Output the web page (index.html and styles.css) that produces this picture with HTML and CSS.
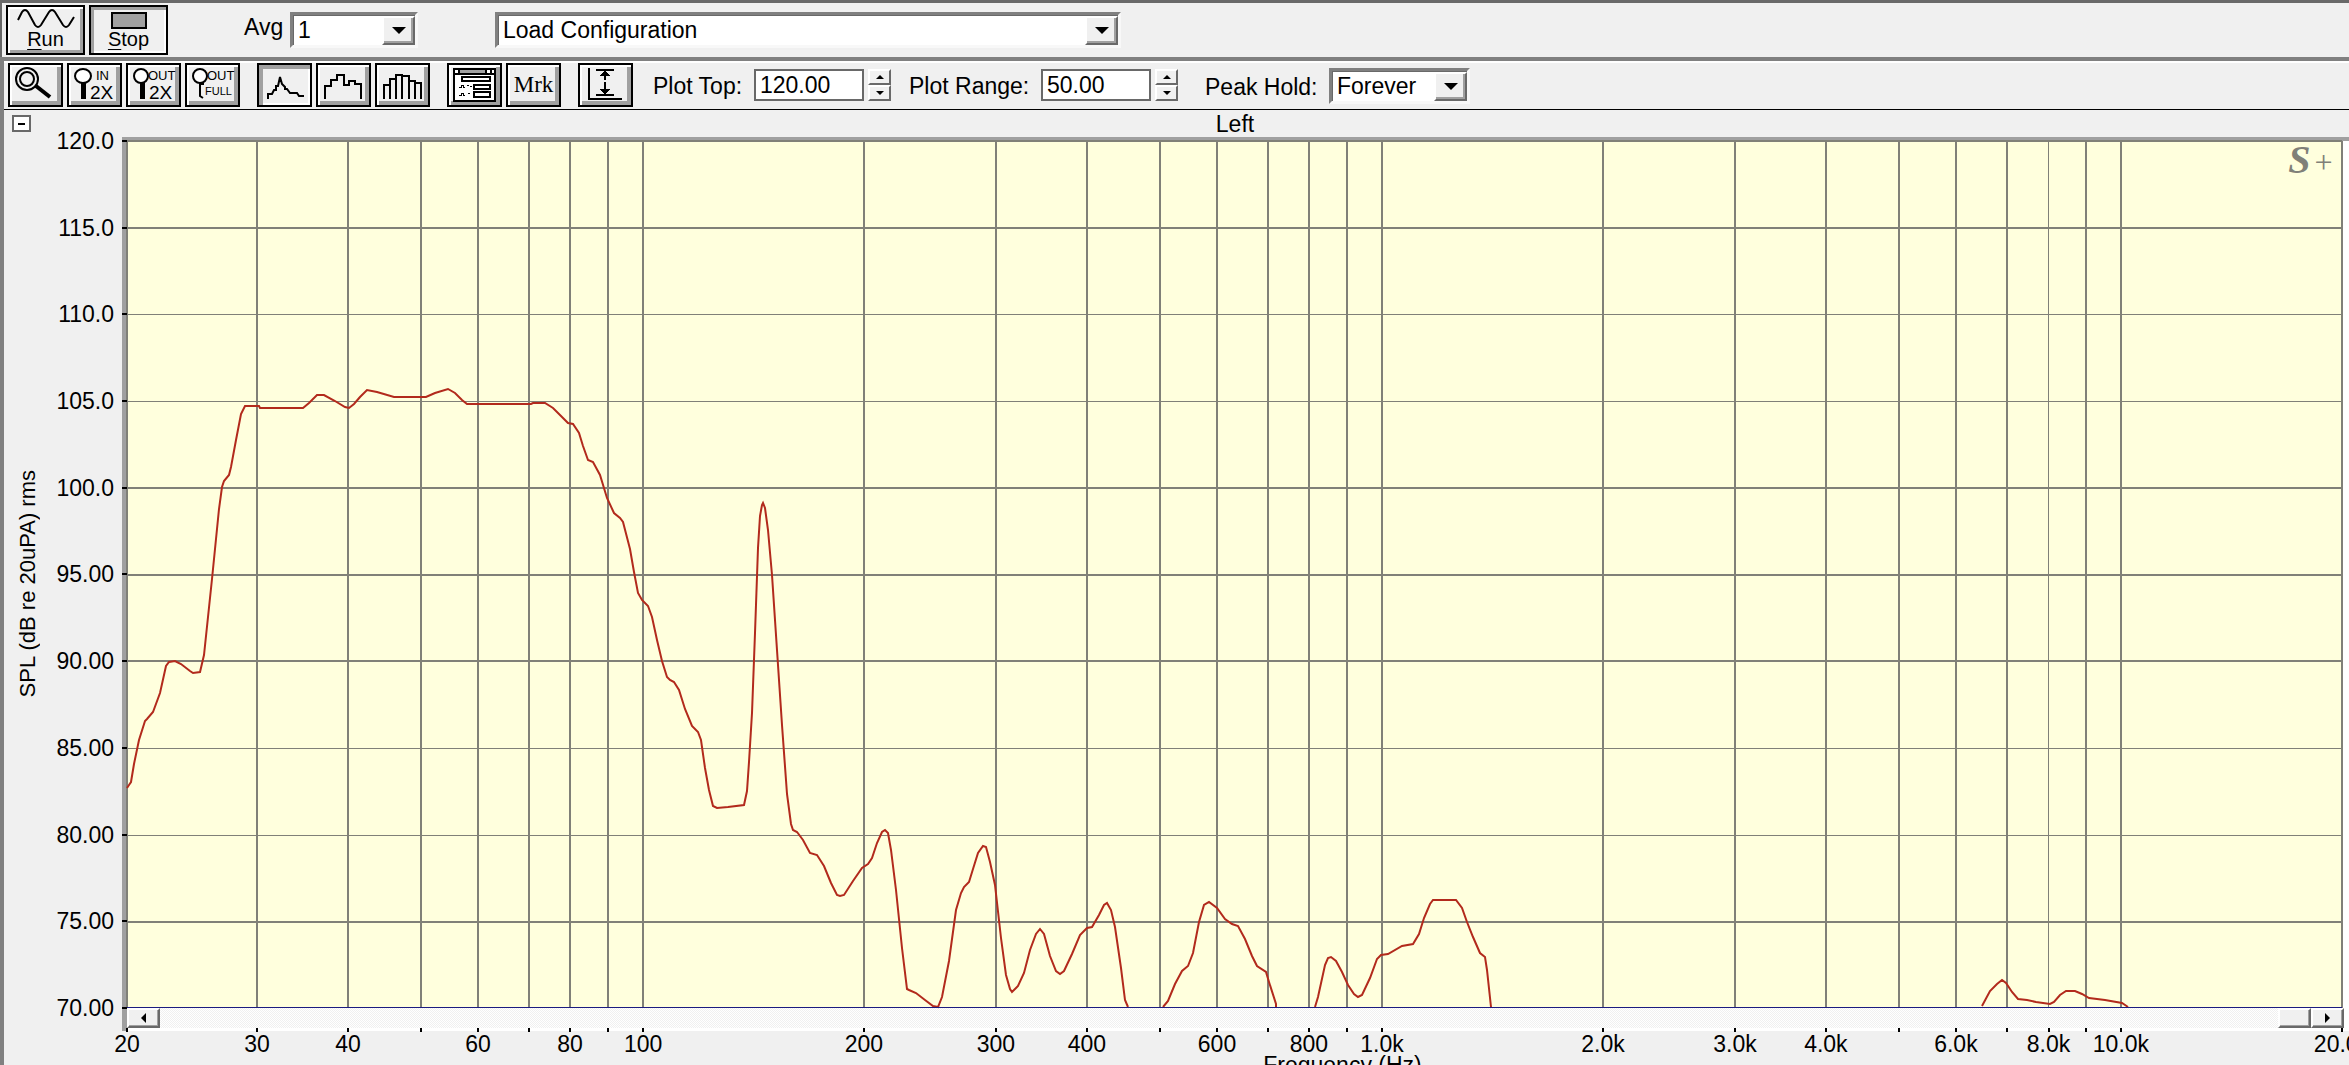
FILE: index.html
```html
<!DOCTYPE html>
<html lang="en">
<head>
<meta charset="utf-8">
<meta name="viewport" content="width=device-width, initial-scale=1">
<title>Spectrum - Left</title>
<link rel="stylesheet" href="styles.css">
</head>
<body>
<header class="run-bar">
  <button class="run-btn" type="button">
    <svg width="58" height="20" viewBox="0 0 58 20" aria-hidden="true"><path d="M1 11L5 3Q8 -1 11 3L18 16Q21 20 24 16L32 3Q35 -1 38 3L46 16Q49 20 52 16L57 8"/></svg>
    <span><u>R</u>un</span>
  </button>
  <button class="run-btn pressed" type="button">
    <svg width="38" height="20" viewBox="0 0 38 20" aria-hidden="true"><rect class="block" x="2" y="4" width="34" height="15"/></svg>
    <span><u>S</u>top</span>
  </button>
  <label class="avg-label" for="avg">Avg</label>
  <span class="combo avg"><select id="avg"><option>1</option></select><i class="arrow"></i></span>
  <span class="combo config"><select aria-label="Configuration"><option>Load Configuration</option></select><i class="arrow"></i></span>
</header>

<div class="window">
  <div class="tool-bar">
    <div class="group">
      <button class="tool" type="button" aria-label="Zoom">
        <svg viewBox="0 0 51 40"><circle cx="17" cy="14" r="11"/><circle cx="17" cy="14" r="7"/><path class="thick" d="M26 21L40 32"/></svg>
      </button>
      <button class="tool" type="button" aria-label="Zoom in 2X">
        <svg viewBox="0 0 51 40"><ellipse class="lens" cx="14" cy="11" rx="8" ry="7"/><rect class="solid" x="12" y="18" width="5" height="16"/><text class="small" x="27" y="15">IN</text><text class="big" x="21" y="34">2X</text></svg>
      </button>
      <button class="tool" type="button" aria-label="Zoom out 2X">
        <svg viewBox="0 0 51 40"><ellipse class="lens" cx="13" cy="11" rx="7" ry="7"/><rect class="solid" x="12" y="18" width="5" height="16"/><text class="small" x="20" y="15">OUT</text><text class="big" x="21" y="34">2X</text></svg>
      </button>
      <button class="tool" type="button" aria-label="Zoom out full">
        <svg viewBox="0 0 51 40"><ellipse class="lens" cx="13" cy="11" rx="7" ry="7"/><path d="M17 19H13V31L16 33"/><text class="small" x="20" y="15">OUT</text><text class="tiny" x="18" y="30">FULL</text></svg>
      </button>
    </div>
    <div class="group">
      <button class="tool pressed" type="button" aria-label="Line plot">
        <svg viewBox="0 0 51 40"><path d="M9 34V29H13L15 25H17V21H19L21 12L23 19L26 22V24H28L31 28H38L40 31H45"/></svg>
      </button>
      <button class="tool" type="button" aria-label="Step plot">
        <svg class="crisp" viewBox="0 0 51 40"><path d="M7 34V21H13V15H19V10H26V20H31V16H37V19H43V34"/></svg>
      </button>
      <button class="tool" type="button" aria-label="Bar plot">
        <svg class="crisp" viewBox="0 0 51 40"><path d="M7 34V20H13M13 34V14H19M19 34V10H25V34M25 11H32V34M32 16H38V34M38 18H44V34"/></svg>
      </button>
    </div>
    <div class="group">
      <button class="tool" type="button" aria-label="Options">
        <svg class="crisp" viewBox="0 0 51 40"><rect class="paper" x="5" y="4" width="41" height="32"/><rect class="shade" x="11" y="5" width="25" height="3"/><path d="M5 9H46M10 4V9M37 4V9M42 4V9"/><rect x="13" y="12" width="28" height="4"/><rect x="25" y="20" width="16" height="4"/><rect x="25" y="27" width="16" height="5"/><path class="thin" d="M10 22h2v-2h2v2h2M18 20h2M21 21h2M10 30h2v-2h2v2h2M19 28h2"/></svg>
      </button>
      <button class="tool mrk" type="button">Mrk</button>
    </div>
    <div class="group last">
      <button class="tool" type="button" aria-label="Auto scale">
        <svg class="crisp" viewBox="0 0 51 40"><path d="M9 3V34H42M16 5H34M16 30H34M25 6V15M25 17V29"/><path class="solid" d="M25 5L30 11H20ZM25 30L30 24H20Z"/></svg>
      </button>
    </div>
    <label class="top-label" for="plot-top">Plot Top:</label>
    <input class="value" id="plot-top" type="text" value="120.00">
    <span class="spin"><button type="button" aria-label="Raise plot top"><i class="up"></i></button><button type="button" aria-label="Lower plot top"><i class="down"></i></button></span>
    <label class="range-label" for="plot-range">Plot Range:</label>
    <input class="value" id="plot-range" type="text" value="50.00">
    <span class="spin"><button type="button" aria-label="Raise plot range"><i class="up"></i></button><button type="button" aria-label="Lower plot range"><i class="down"></i></button></span>
    <label class="hold-label" for="hold">Peak Hold:</label>
    <span class="combo hold"><select id="hold"><option>Forever</option></select><i class="arrow"></i></span>
  </div>

  <main class="chart">
    <div class="chart-head">
      <button class="collapse" type="button" aria-label="Collapse"></button>
      <h1>Left</h1>
    </div>
    <div class="y-title">SPL (dB re 20uPA) rms</div>
    <ul class="y-axis">
      <li>120.0</li><li>115.0</li><li>110.0</li><li>105.0</li><li>100.0</li><li>95.00</li><li>90.00</li><li>85.00</li><li>80.00</li><li>75.00</li><li>70.00</li>
    </ul>
    <div class="plot">
      <div class="canvas">
        <svg viewBox="127 141 2215 867" preserveAspectRatio="none" role="img" aria-label="Sound pressure level against frequency">
          <path class="grid" d="M127 141V1008M257 141V1008M348 141V1008M421 141V1008M478 141V1008M529 141V1008M570 141V1008M608 141V1008M643 141V1008M864 141V1008M996 141V1008M1087 141V1008M1160 141V1008M1217 141V1008M1268 141V1008M1309 141V1008M1347 141V1008M1382 141V1008M1603 141V1008M1735 141V1008M1826 141V1008M1899 141V1008M1956 141V1008M2007 141V1008M2086 141V1008M2121 141V1008M2342 141V1008"/>
          <path class="grid" d="M127 141H2342M127 228H2342M127 488H2342M127 575H2342M127 661H2342M127 922H2342"/>
          <path class="grid fine" d="M2048.500 141V1008M127 314.500H2342M127 401.500H2342M127 748.500H2342M127 835.500H2342"/>
          <path class="trace" d="M127 788L129 785L131 782L134 764L139 740L145 721L147 719L153 712L160 693L166 666L169 662L175 661L181 664L190 671L193 673L200 672L204 655L212 579L219 509L222 487L224 481L229 475L231 467L236 440L241 414L245 406L259 406L260 408L303 408L309 403L317 395L324 395L335 401L345 407L349 408L354 404L360 397L367 390L377 392L394 397L426 397L435 393L448 389L455 393L462 400L467 404L531 404L533 403L545 403L553 408L562 417L568 423L573 424L579 433L583 446L588 460L593 462L600 475L607 498L614 513L620 518L623 522L630 549L634 572L638 593L642 600L648 606L652 617L657 640L662 661L667 677L670 680L674 682L679 690L685 709L692 726L698 732L701 740L705 768L709 790L713 806L717 808L728 807L744 805L747 791L749 762L752 713L755 633L758 548L760 516L762 505L763 503L765 508L768 530L772 575L777 650L782 725L787 794L791 824L793 830L797 832L803 840L810 853L817 855L824 866L831 883L837 895L840 896L844 895L853 881L862 868L868 864L872 858L877 843L882 832L885 830L888 833L891 850L896 890L902 948L907 989L909 990L916 993L925 1000L933 1006L938 1007L942 997L949 961L956 910L961 893L964 887L969 882L973 869L978 853L983 846L986 847L990 862L995 885L1001 938L1006 975L1010 989L1012 992L1018 986L1024 973L1030 950L1036 934L1040 929L1044 934L1050 956L1056 971L1060 974L1064 971L1072 954L1080 935L1087 928L1092 927L1099 915L1104 905L1107 903L1111 910L1115 927L1121 968L1125 1000L1128 1007M1163 1007L1168 1001L1175 984L1182 971L1188 966L1193 953L1199 922L1204 905L1209 902L1217 908L1225 919L1232 924L1238 926L1245 939L1252 956L1257 966L1266 972L1269 982L1276 1004V1007M1315 1007L1318 997L1325 965L1328 958L1331 957L1336 961L1342 972L1348 985L1354 994L1358 997L1362 995L1370 978L1377 959L1381 955L1388 954L1402 946L1413 944L1419 934L1424 918L1430 904L1433 900H1456L1462 908L1467 922L1473 937L1480 953L1485 957L1487 970L1491 1007M1982 1006L1990 991L1997 984L2002 980L2006 983L2012 992L2018 999L2027 1000L2036 1002L2050 1004L2054 1002L2060 995L2066 991H2075L2082 994L2089 998L2105 1000L2122 1003L2128 1007"/>
          <path class="base" d="M127 1007.500H2342"/>
        </svg>
        <span class="logo"><b>S</b>+</span>
      </div>
      <div class="scroll">
        <button type="button" aria-label="Scroll left"><i class="left"></i></button>
        <span class="track"></span>
        <button type="button" aria-label="Scroll position"></button>
        <button type="button" aria-label="Scroll right"><i class="right"></i></button>
      </div>
    </div>
    <div class="x-axis">
      <ul class="x-ticks">
        <li style="left:0%">20</li><li style="left:5.87%">30</li><li style="left:9.98%">40</li><li style="left:13.27%"></li><li style="left:15.85%">60</li><li style="left:18.15%"></li><li style="left:20%">80</li><li style="left:21.72%"></li><li style="left:23.3%">100</li><li style="left:33.27%">200</li><li style="left:39.23%">300</li><li style="left:43.34%">400</li><li style="left:46.64%"></li><li style="left:49.21%">600</li><li style="left:51.51%"></li><li style="left:53.36%">800</li><li style="left:55.08%"></li><li style="left:56.66%">1.0k</li><li style="left:66.64%">2.0k</li><li style="left:72.6%">3.0k</li><li style="left:76.7%">4.0k</li><li style="left:80%"></li><li style="left:82.57%">6.0k</li><li style="left:84.88%"></li><li style="left:86.75%">8.0k</li><li style="left:88.44%"></li><li style="left:90.02%">10.0k</li><li style="left:100%">20.0k</li>
      </ul>
      <div class="x-title">Frequency (Hz)</div>
    </div>
  </main>
</div>
</body>
</html>
```
FILE: styles.css
```css
* { box-sizing: border-box; }

body {
  margin: 0;
  height: 100vh;
  display: flex;
  flex-direction: column;
  overflow: hidden;
  background: #f0f0f0;
  color: #000;
  font: 23px/26px "Liberation Sans", Arial, sans-serif;
}

button, select, input { font: inherit; color: inherit; border-radius: 0; margin: 0; }
ul { list-style: none; margin: 0; padding: 0; }
i { font-style: normal; }

/* top bar */
.run-bar {
  display: flex;
  flex: none;
  height: 57px;
  padding: 2px 0 0 4px;
  border-top: 3px solid #696969;
  border-left: 2px solid #696969;
}

.run-btn {
  width: 79px;
  height: 50px;
  margin-right: 4px;
  padding: 2px 0 0;
  display: flex;
  flex-direction: column;
  align-items: center;
  border: 2px solid #000;
  background: #f0f0f0;
  box-shadow: inset 2px 2px #fff, inset -3px -3px #a0a0a0;
  font-size: 20px;
  line-height: 20px;
}
.run-btn svg { display: block; flex: none; overflow: visible; fill: none; stroke: #000; stroke-width: 2; }
.run-btn .block { fill: #a0a0a0; }
.run-btn u { text-underline-offset: 3px; text-decoration-thickness: 1px; }
.run-btn.pressed { box-shadow: inset 3px 3px #a0a0a0, inset -2px -2px #fff; }

.avg-label { margin: 9px 0 0 72px; width: 46px; }

.combo { position: relative; display: block; flex: none; height: 36px; }
.combo select {
  display: block;
  width: 100%;
  height: 100%;
  padding: 0 5px;
  appearance: none;
  background: #fff;
  border: 3px solid;
  border-color: #808080 #f8f8f8 #f8f8f8 #808080;
  box-shadow: inset 1px 1px #696969;
}
.combo .arrow {
  position: absolute;
  right: 3px;
  top: 4px;
  bottom: 3px;
  width: 33px;
  background: #f0f0f0;
  border: 2px solid;
  border-color: #fff #696969 #696969 #fff;
  box-shadow: inset -2px -2px #a0a0a0;
  pointer-events: none;
  display: grid;
  place-items: center;
}
.combo .arrow::before {
  content: "";
  border: 7px solid transparent;
  border-top: 7px solid #000;
  border-bottom: 0;
}
.combo.avg { width: 128px; margin: 7px 77px 0 0; }
.avg-label, .top-label, .range-label, .hold-label { flex: none; }
.combo.config { width: 626px; margin-top: 7px; }

/* measurement window */
.window {
  flex: 1;
  min-height: 0;
  display: flex;
  flex-direction: column;
  border: solid #808080;
  border-width: 4px 0 0 4px;
  box-shadow: inset 0 2px #fff;
}

.tool-bar {
  display: flex;
  flex: none;
  height: 49px;
  padding: 2px 0 0 4px;
  border-bottom: 1px solid #000;
}
.group { display: flex; gap: 4px; margin-right: 17px; }
.group.last { margin-right: 20px; }
.tool {
  width: 55px;
  height: 44px;
  padding: 0;
  border: 2px solid #000;
  background: #f0f0f0;
  box-shadow: inset 2px 2px #fff, inset -4px -4px #a0a0a0;
}
.tool.pressed { box-shadow: inset 4px 4px #a0a0a0, inset -2px -2px #fff; }
.tool svg { display: block; width: 51px; height: 40px; fill: none; stroke: #000; stroke-width: 2; }
.tool text { fill: #000; stroke: none; }
.crisp { shape-rendering: crispEdges; }
.thick { stroke-width: 4; }
.thin { stroke-width: 1; }
.tool .solid { fill: #000; stroke: none; }
.tool .shade { fill: #a0a0a0; stroke: none; }
.lens, .paper { fill: #fff; }
.small { font-size: 13px; }
.tiny { font-size: 11px; }
.big { font-size: 19px; }
.mrk { font-family: "Liberation Serif", "Times New Roman", serif; }

.top-label { width: 101px; margin-top: 10px; }
.range-label { width: 132px; margin: 10px 0 0 18px; }
.hold-label { width: 124px; margin: 11px 0 0 27px; }
.value {
  width: 110px;
  height: 32px;
  margin: 6px 4px 0 0;
  padding: 0 4px;
  border: 2px solid #696969;
  background: #fff;
}
.spin { display: flex; flex-direction: column; width: 23px; height: 32px; margin-top: 6px; }
.spin button, .scroll button {
  flex: 1;
  padding: 0;
  display: grid;
  place-items: center;
  background: #f0f0f0;
  border: 2px solid;
  border-color: #fff #696969 #696969 #fff;
}
.up, .down { border: 4px solid transparent; }
.up { border-top: 0; border-bottom-color: #000; }
.down { border-bottom: 0; border-top-color: #000; }
.combo.hold { width: 141px; margin-top: 5px; }

/* chart */
.chart {
  flex: 1;
  min-height: 0;
  display: grid;
  grid-template-columns: 48px 70px 1fr;
  grid-template-rows: 27px 1fr 34px;
}
.chart-head { grid-column: 1 / -1; display: flex; }
.collapse {
  width: 19px;
  height: 17px;
  margin: 5px 0 0 8px;
  padding: 0;
  display: grid;
  place-items: center;
  border: 2px solid #696969;
  background: #fff;
}
.collapse::before { content: ""; width: 7px; height: 2px; background: #000; }
h1 { flex: 1; margin: 0; padding-left: 90px; text-align: center; font-weight: normal; font-size: 23px; line-height: 28px; }

.y-title {
  writing-mode: vertical-rl;
  transform: rotate(180deg);
  justify-self: center;
  align-self: center;
  font-size: 22px;
  line-height: 30px;
  white-space: nowrap;
}
.y-axis {
  display: flex;
  flex-direction: column;
  justify-content: space-between;
  margin: 4px 0 23px;
}
.y-axis li {
  position: relative;
  z-index: 1;
  height: 0;
  padding-right: 8px;
  display: flex;
  align-items: center;
  justify-content: flex-end;
}
.y-axis li::after {
  content: "";
  position: absolute;
  left: 100%;
  top: -1px;
  width: 5px;
  height: 2px;
  background: #000;
}

.plot {
  min-height: 0;
  display: flex;
  flex-direction: column;
  padding-right: 7px;
  border: solid #a0a0a0;
  border-width: 4px 0 0 5px;
  background: #fff;
}
.canvas { position: relative; flex: 1; min-height: 0; background: #ffffdd; }
.canvas svg { position: absolute; inset: 0; width: 100%; height: 100%; overflow: visible; fill: none; shape-rendering: crispEdges; }
.canvas path { vector-effect: non-scaling-stroke; }
.grid { stroke: #808078; stroke-width: 2; }
.grid.fine { stroke-width: 1; }
.trace { stroke: #b22a1c; stroke-width: 2; shape-rendering: auto; }
.base { stroke: #1c1c80; stroke-width: 1; }
.logo {
  position: absolute;
  top: 0;
  right: 8px;
  color: #808078;
  font: italic 32px/38px "Liberation Serif", "Times New Roman", serif;
}
.logo b { font-size: 40px; margin-right: 2px; }

.scroll { display: flex; flex: none; height: 20px; margin: 0 -2px 3px 0; }
.scroll button { flex: none; width: 33px; box-shadow: inset -1px -1px #a0a0a0; }
.track { flex: 1; background: repeating-conic-gradient(#fff 0 25%, #f0f0f0 0 50%) 0 0 / 2px 2px; }
.left, .right { border: 5px solid transparent; }
.left { border-left: 0; border-right-color: #000; }
.right { border-right: 0; border-left-color: #000; }

.x-axis { grid-column: 3; min-height: 0; margin: 0 7px 0 5px; }
.x-ticks { position: relative; height: 21px; }
.x-ticks li {
  position: absolute;
  top: 0;
  width: 80px;
  margin-left: -40px;
  text-align: center;
}
.x-ticks li::before {
  content: "";
  position: absolute;
  left: 39px;
  top: -3px;
  width: 2px;
  height: 4px;
  background: #000;
}
.x-title { padding-left: 216px; text-align: center; }
```
